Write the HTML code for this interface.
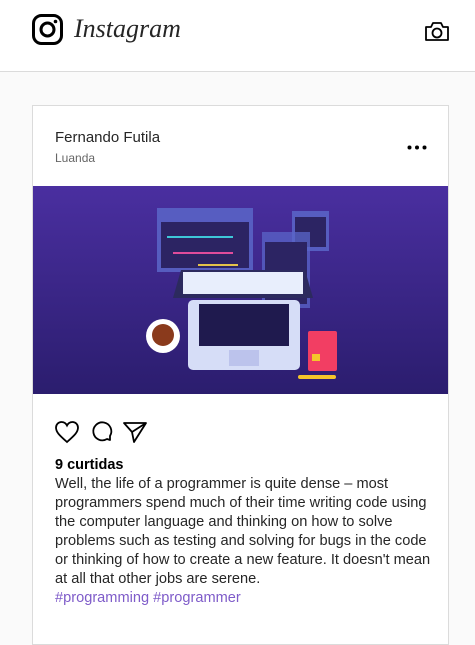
<!DOCTYPE html>
<html><head><meta charset="utf-8"><style>
*{margin:0;padding:0;box-sizing:border-box}
body{width:475px;height:627px;overflow:hidden;background:#fafafa;font-family:"Liberation Sans",Arial,sans-serif;color:#000}
.top{height:72px;background:#fff;border-bottom:1px solid #dbdbdb;position:relative}
.logo{position:absolute;left:32px;top:14px}
.brand{position:absolute;left:74px;top:14px;font-family:"URW Chancery L","Z003",cursive;font-style:italic;font-size:26px;color:#262626}
.cam{position:absolute;left:424px;top:21px}
.card{position:absolute;left:32px;top:105px;width:417px;height:540px;background:#fff;border:1px solid #dbdbdb}
.name{position:absolute;left:22px;top:23px;font-size:15px;color:#262626}
.loc{position:absolute;left:22px;top:45px;font-size:12px;color:#666}
.dots{position:absolute;left:374px;top:39px}
.img{position:absolute;left:0;top:80px;width:415px;height:208px;background:linear-gradient(#4a2fa0,#2b1d6e)}
.icons{position:absolute;left:22px;top:314px}
.likes{position:absolute;left:22px;top:351px;font-size:14.5px;font-weight:bold}
.cap{position:absolute;left:22px;top:369px;width:394px;font-size:14.6px;line-height:19px;color:#262626;white-space:nowrap}
.tag{color:#7e5bc9}
</style></head><body>
<div class="top">
<svg class="logo" width="31" height="31" viewBox="0 0 31 31"><rect x="1.5" y="1.5" width="28" height="28" rx="8" fill="none" stroke="#000" stroke-width="3"/><circle cx="15.5" cy="15.5" r="6.5" fill="none" stroke="#000" stroke-width="3"/><circle cx="23.5" cy="7.5" r="1.8"/></svg>
<div class="brand">Instagram</div>
<svg class="cam" width="26" height="21" viewBox="0 0 26 21"><path d="M2 6h5l2-4h8l2 4h5v13H2z" fill="none" stroke="#000" stroke-width="1.8" stroke-linejoin="round"/><circle cx="13" cy="12" r="4.5" fill="none" stroke="#000" stroke-width="1.8"/></svg>
</div>
<div class="card">
<div class="name">Fernando Futila</div>
<div class="loc">Luanda</div>
<svg class="dots" width="20" height="5"><circle cx="2.5" cy="2.5" r="2"/><circle cx="10" cy="2.5" r="2"/><circle cx="17.5" cy="2.5" r="2"/></svg>
<div class="img">
<svg width="415" height="208" viewBox="0 0 415 208">
<rect x="124" y="22" width="96" height="64" fill="#5a66c8" opacity=".85"/><rect x="128" y="36" width="88" height="46" fill="#2c2463"/>
<rect x="134" y="50" width="66" height="2" fill="#3ec7d8"/><rect x="140" y="66" width="60" height="2" fill="#e04c9b"/><rect x="165" y="78" width="40" height="2" fill="#e3c24a"/>
<rect x="259" y="25" width="37" height="40" fill="#5a66c8" opacity=".85"/><rect x="262" y="31" width="31" height="30" fill="#2c2463"/>
<rect x="229" y="46" width="48" height="76" fill="#5a66c8" opacity=".75"/><rect x="232" y="56" width="42" height="62" fill="#2c2463"/>
<path d="M148 84h124l8 28H140z" fill="#2c2a5e"/><rect x="150" y="86" width="120" height="22" fill="#e8eefc"/>
<rect x="155" y="114" width="112" height="70" rx="5" fill="#d6ddf7"/><rect x="166" y="118" width="90" height="42" fill="#1f1a4e"/><rect x="196" y="164" width="30" height="16" fill="#bcc3ec"/>
<circle cx="130" cy="150" r="17" fill="#fff"/><circle cx="130" cy="149" r="11" fill="#8a3a1c"/>
<rect x="275" y="145" width="29" height="40" rx="2" fill="#f23e63"/><rect x="279" y="168" width="8" height="7" fill="#f5c52a"/>
<rect x="265" y="189" width="38" height="4" rx="2" fill="#f5c52a"/>
</svg></div>
<svg class="icons" width="100" height="26" viewBox="0 0 100 26"><path d="M12 22C4 15 1 12 1 7.5 1 4.5 3.5 2 6.5 2 9 2 11 3.5 12 5.5 13 3.5 15 2 17.5 2 20.5 2 23 4.5 23 7.5 23 12 20 15 12 22z" fill="none" stroke="#000" stroke-width="1.8"/><path d="M55 16a9 9 0 1 0-3 3l3 1z" fill="none" stroke="#000" stroke-width="1.8" stroke-linejoin="round"/><path d="M69 3h22L79 22l-2-10zM77 12l14-9" fill="none" stroke="#000" stroke-width="1.8" stroke-linejoin="round"/></svg>
<div class="likes">9 curtidas</div>
<div class="cap">Well, the life of a programmer is quite dense – most<br>programmers spend much of their time writing code using<br>the computer language and thinking on how to solve<br>problems such as testing and solving for bugs in the code<br>or thinking of how to create a new feature. It doesn't mean<br>at all that other jobs are serene.<br><span class="tag">#programming #programmer</span></div>
</div>
</body></html>
